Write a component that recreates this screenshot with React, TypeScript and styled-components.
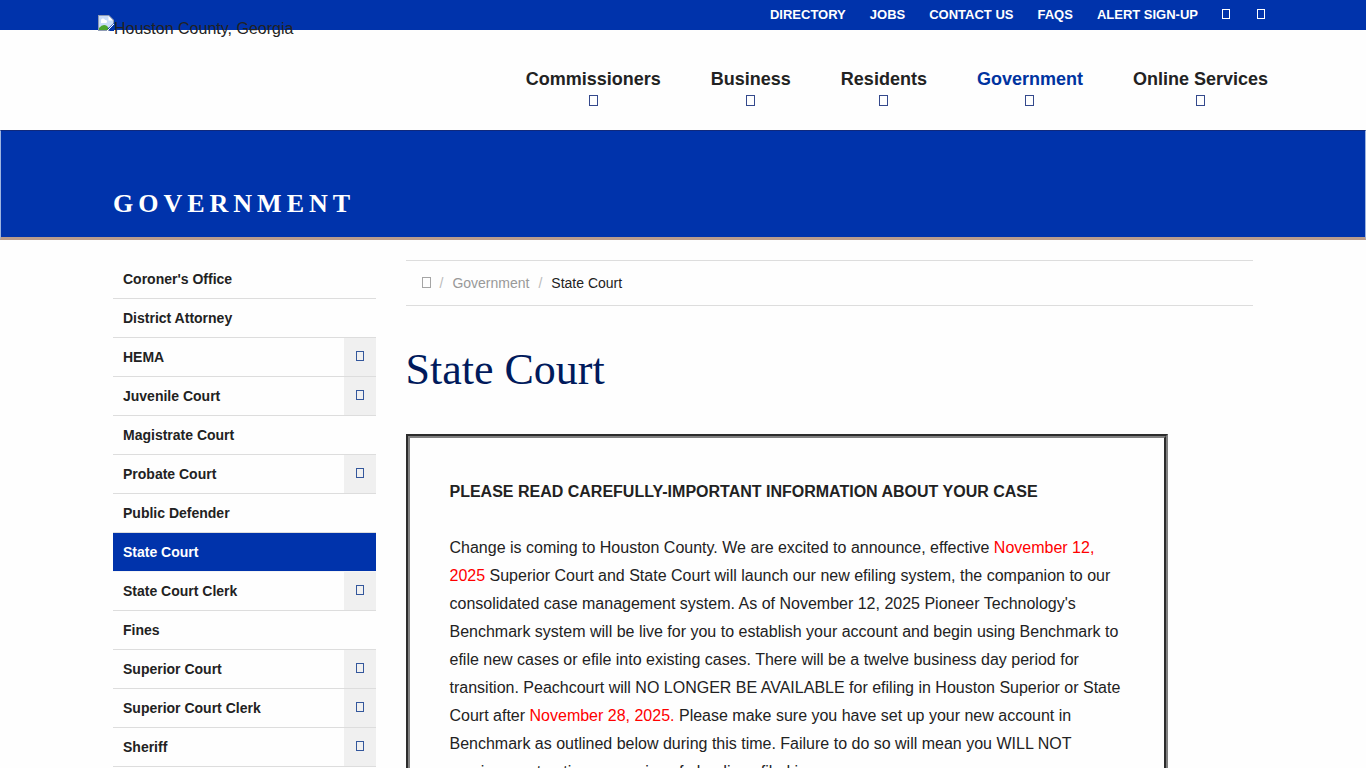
import React from "react";
import styled, { createGlobalStyle } from "styled-components";

const blue = "#0033ab";
const ink = "#222222";

const GlobalStyle = createGlobalStyle`
  *, *::before, *::after { box-sizing: border-box; }
  html { overflow: hidden; height: 100%; }
  body {
    margin: 0;
    height: 100%;
    overflow: hidden;
    background: #fefefe;
    color: ${ink};
    font: 16px/28px "Liberation Sans", Arial, sans-serif;
  }
  a { color: inherit; text-decoration: none; }
  ul, ol { list-style: none; margin: 0; padding: 0; }
  button { font: inherit; border: 0; padding: 0; cursor: pointer; }
`;

const Container = styled.div`
  position: relative;
  width: 100%;
  max-width: 1170px;
  margin: 0 auto;
`;

const TopBar = styled.div`
  height: 30px;
  background: ${blue};
`;

const Logo = styled.a`
  position: absolute;
  top: 15px;
  left: 0;
  display: flex;
  line-height: 27px;
  white-space: nowrap;
`;

const TopLinks = styled.ul`
  display: flex;
  justify-content: flex-end;
  padding-right: 3px;
  color: #ffffff;
  font-size: 13px;
  font-weight: bold;
  line-height: 30px;
`;

const TopItem = styled.li<{ $gap?: number }>`
  margin-left: ${(p) => p.$gap ?? 24}px;
`;

const Glyph = styled.span<{ $color: string; $large?: boolean }>`
  display: inline-block;
  width: ${(p) => (p.$large ? 9 : 8)}px;
  height: ${(p) => (p.$large ? 11 : 10)}px;
  border: 1px solid ${(p) => p.$color};
`;

const Header = styled.header`
  height: 100px;
`;

const MainNav = styled.ul`
  display: flex;
  justify-content: flex-end;
  gap: 50px;
  padding-top: 37px;
`;

const NavLink = styled.a<{ $active?: boolean }>`
  display: flex;
  flex-direction: column;
  align-items: center;
  gap: 4px;
  font-size: 18px;
  font-weight: bold;
  line-height: 24px;
  color: ${(p) => (p.$active ? "#0033a0" : ink)};
`;

const Banner = styled.section`
  height: 110px;
  background: ${blue};
  border: 1px solid #9db4e0;
  border-top-color: #10297c;
  border-bottom: 3px solid #b99c8c;
`;

const BannerTitle = styled.p`
  margin: 0;
  padding: 57px 15px 0;
  color: #ffffff;
  font: bold 26px/32px "Liberation Serif", "Times New Roman", serif;
  letter-spacing: 5px;
  text-transform: uppercase;
`;

const Columns = styled(Container)`
  display: grid;
  grid-template-columns: minmax(0, 1fr) minmax(0, 3fr);
  padding-top: 20px;
  > * { padding: 0 15px; }
`;

const SideItem = styled.li<{ $active?: boolean }>`
  display: flex;
  justify-content: space-between;
  height: 39px;
  border-bottom: 1px solid ${(p) => (p.$active ? "#f4f4f4" : "#dddddd")};
  background: ${(p) => (p.$active ? blue : "transparent")};
  color: ${(p) => (p.$active ? "#ffffff" : ink)};
  font-size: 14px;
  font-weight: bold;
  line-height: 38px;
`;

const SideLink = styled.a`
  flex: 1;
  padding-left: 10px;
`;

const Toggle = styled.button`
  display: flex;
  justify-content: center;
  align-items: center;
  width: 32px;
  padding-bottom: 2px;
  background: #f0f0f0;
`;

const Crumbs = styled.ol`
  display: flex;
  align-items: center;
  height: 46px;
  padding-left: 16px;
  border: solid #dddddd;
  border-width: 1px 0;
  font-size: 14px;
  line-height: 20px;
  color: #999999;
`;

const Crumb = styled.li<{ $current?: boolean }>`
  color: ${(p) => (p.$current ? ink : "#999999")};
  &:not(:first-child)::before {
    content: "/";
    padding: 0 9px;
    color: #bbbbbb;
  }
`;

const Title = styled.h1`
  margin: 36px 0;
  color: #001a5c;
  font: 44px/56px "Liberation Serif", "Times New Roman", serif;
`;

const Notice = styled.article`
  width: 90%;
  padding: 40px;
  border: 4px groove #808080;
  p { margin: 0 0 28px; }
`;

const Red = styled.span`
  color: #ff0000;
`;

const topLinks = ["Directory", "Jobs", "Contact Us", "FAQs", "Alert Sign-Up"];
const navLinks = ["Commissioners", "Business", "Residents", "Government", "Online Services"];
const sideLinks = [
  { name: "Coroner's Office" },
  { name: "District Attorney" },
  { name: "HEMA", sub: true },
  { name: "Juvenile Court", sub: true },
  { name: "Magistrate Court" },
  { name: "Probate Court", sub: true },
  { name: "Public Defender" },
  { name: "State Court", active: true },
  { name: "State Court Clerk", sub: true },
  { name: "Fines" },
  { name: "Superior Court", sub: true },
  { name: "Superior Court Clerk", sub: true },
  { name: "Sheriff", sub: true },
];

export default function App() {
  return (
    <>
      <GlobalStyle />
      <TopBar>
        <Container>
          <Logo href="#">
            <svg width="16" height="16" viewBox="0 0 16 16" aria-hidden="true">
              <path d="M0 0h11l5 5v11H0z" fill="#8f9bb3" />
              <path d="M1 1h9.5L15 5.500V15H1z" fill="#c9dcf8" />
              <path d="M3 6a2 2 0 0 1 4-1 1.500 1.500 0 0 1 1 3H3z" fill="#ffffff" />
              <path d="M10.500 1v4.500H15z" fill="#ffffff" />
              <path d="M1 15v-2q4-5 8-2l3 4z" fill="#4da52e" />
              <path d="M16 8v8h-4L9.500 14z" fill={blue} />
              <path d="M9 16l7-7" stroke="#ffffff" strokeWidth="1" />
            </svg>
            Houston County, Georgia
          </Logo>
          <TopLinks>
            {topLinks.map((name) => (
              <TopItem key={name}>
                <a href="#">{name.toUpperCase()}</a>
              </TopItem>
            ))}
            <TopItem>
              <a href="#" aria-label="Facebook"><Glyph $color="#ffffff" /></a>
            </TopItem>
            <TopItem $gap={27}>
              <a href="#" aria-label="Search"><Glyph $color="#ffffff" /></a>
            </TopItem>
          </TopLinks>
        </Container>
      </TopBar>
      <Header>
        <Container as="nav">
          <MainNav>
            {navLinks.map((name) => (
              <li key={name}>
                <NavLink href="#" $active={name === "Government"}>
                  {name}
                  <Glyph $color="#34498c" $large />
                </NavLink>
              </li>
            ))}
          </MainNav>
        </Container>
      </Header>
      <Banner>
        <Container>
          <BannerTitle>Government</BannerTitle>
        </Container>
      </Banner>
      <Columns>
        <nav>
          <ul>
            {sideLinks.map(({ name, sub, active }) => (
              <SideItem key={name} $active={active}>
                <SideLink href="#">{name}</SideLink>
                {sub && (
                  <Toggle type="button" aria-label={`Expand ${name}`}>
                    <Glyph $color="#34579c" />
                  </Toggle>
                )}
              </SideItem>
            ))}
          </ul>
        </nav>
        <main>
          <Crumbs>
            <Crumb><a href="#" aria-label="Home"><Glyph $color="#a5a5a5" $large /></a></Crumb>
            <Crumb><a href="#">Government</a></Crumb>
            <Crumb $current>State Court</Crumb>
          </Crumbs>
          <Title>State Court</Title>
          <Notice>
            <p><strong>PLEASE READ CAREFULLY-IMPORTANT INFORMATION ABOUT YOUR CASE</strong></p>
            <p>
              Change is coming to Houston County. We are excited to announce, effective{" "}
              <Red>November 12, 2025</Red> Superior Court and State Court will launch our new
              efiling system, the companion to our consolidated case management system. As of
              November 12, 2025 Pioneer Technology's Benchmark system will be live for you to
              establish your account and begin using Benchmark to efile new cases or efile into
              existing cases. There will be a twelve business day period for transition.
              Peachcourt will NO LONGER BE AVAILABLE for efiling in Houston Superior or State
              Court after <Red>November 28, 2025.</Red> Please make sure you have set up your new
              account in Benchmark as outlined below during this time. Failure to do so will mean
              you WILL NOT receive court notices or copies of pleadings filed in your case.
            </p>
          </Notice>
        </main>
      </Columns>
    </>
  );
}
